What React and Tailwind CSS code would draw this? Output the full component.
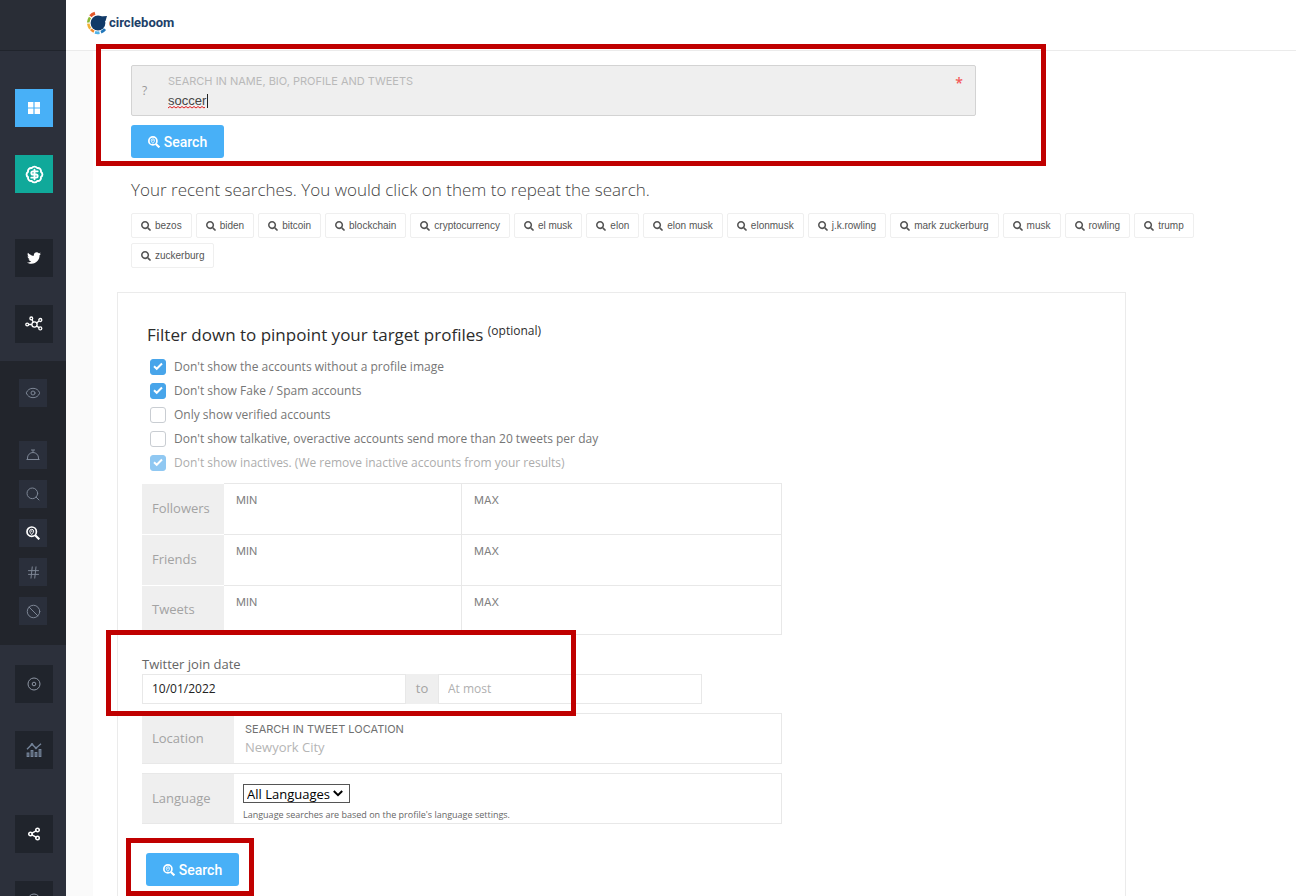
import { useState } from 'react';
import { FaSearch, FaTwitter } from 'react-icons/fa';
import { Ban, BadgeDollarSign, Eye, Hash, Search, Share2 } from 'lucide-react';

const RECENT = [
  'bezos', 'biden', 'bitcoin', 'blockchain', 'cryptocurrency', 'el musk', 'elon', 'elon musk',
  'elonmusk', 'j.k.rowling', 'mark zuckerburg', 'musk', 'rowling', 'trump', 'zuckerburg',
];

const OPTIONS = [
  { id: 'image', label: "Don't show the accounts without a profile image", checked: true },
  { id: 'spam', label: "Don't show Fake / Spam accounts", checked: true },
  { id: 'verified', label: 'Only show verified accounts', checked: false },
  { id: 'talkative', label: "Don't show talkative, overactive accounts send more than 20 tweets per day", checked: false },
  { id: 'inactive', label: "Don't show inactives. (We remove inactive accounts from your results)", checked: true, disabled: true },
];

function GridIcon() {
  return (
    <svg width="14" height="14" viewBox="0 0 14 14" fill="currentColor">
      <path d="M1 1h5.4v5.4H1zM7.6 1H13v5.4H7.6zM1 7.6h5.4V13H1zM7.6 7.6H13V13H7.6z" />
    </svg>
  );
}

function NetworkIcon() {
  return (
    <svg width="18" height="16" viewBox="0 0 18 16" fill="none" stroke="currentColor" strokeWidth="1.3">
      <circle cx="9.5" cy="8.5" r="2.6" />
      <circle cx="2.2" cy="8.5" r="1.4" />
      <circle cx="6.3" cy="2.4" r="1.4" />
      <circle cx="15.3" cy="4" r="1.5" />
      <circle cx="15.3" cy="12.4" r="1.5" />
      <path d="M3.6 8.5h3.3M7 3.6l1.3 2.6M11.7 7.1l2.3-2M11.6 10l2.4 1.6" />
    </svg>
  );
}

function BellIcon() {
  return (
    <svg width="14" height="12" viewBox="0 0 14 12" fill="none" stroke="currentColor">
      <path d="M.5 10.500h13M1.500 10.500V9a5.500 5.500 0 0 1 11 0v1.500M5 1h4M7 1v2.500" />
    </svg>
  );
}

function ProfileSearchIcon({ size = 14, width = 1.7 }) {
  return (
    <svg width={size} height={size} viewBox="0 0 14 14" fill="none" stroke="currentColor" strokeWidth={width}>
      <circle cx="5.7" cy="5.7" r="4.7" />
      <path d="M9.2 9.2l4.1 4.1" strokeWidth={width + 0.5} />
      <path d="M5.7 8.6C4.6 7.3 3.8 6.3 3.8 5.2a1.9 1.9 0 0 1 3.8 0c0 1.1-.8 2.1-1.9 3.4z" strokeWidth="1" />
      <circle cx="5.7" cy="5.2" r=".5" strokeWidth=".7" />
    </svg>
  );
}

function TargetIcon() {
  return (
    <svg width="14" height="14" viewBox="0 0 14 14" fill="none" stroke="currentColor">
      <circle cx="7" cy="7" r="6" />
      <circle cx="7" cy="7" r="1.8" />
    </svg>
  );
}

function ChartIcon() {
  return (
    <svg width="16" height="16" viewBox="0 0 16 16" fill="none" stroke="currentColor">
      <path d="M1.2 14.5v-3.500h1.600v3.500zM5.200 14.500v-6h1.600v6zM9.200 14.500v-4h1.600v4zM13.200 14.500v-7h1.600v7z" strokeWidth="1.200" />
      <path d="M1 7.200l5-5 4 4 5-4.500" strokeWidth="1.300" />
      <circle cx="6" cy="2.300" r=".9" />
      <circle cx="10" cy="6" r=".9" />
    </svg>
  );
}

function LogoMark() {
  return (
    <svg width="22" height="24" viewBox="0 0 22 24" fill="none">
      <path d="M4.400 5.300A9.500 9.500 0 0 1 9 2.300" stroke="#e2572b" strokeWidth="3" />
      <path d="M2.200 11.500A9.500 9.500 0 0 1 4 6.500" stroke="#8ab833" strokeWidth="2.600" />
      <path d="M4.300 17.600A9.500 9.500 0 0 1 2.300 12.700" stroke="#f2b134" strokeWidth="2.600" />
      <path d="M8 20.700a9 9 0 0 1-3-2.500" stroke="#ef8b2c" strokeWidth="2.600" />
      <path d="M9 21.400a9.500 9.500 0 0 0 4.500.2" stroke="#4fb3e8" strokeWidth="2.800" />
      <path d="M15 21.200a9.500 9.500 0 0 0 4-3" stroke="#2276b9" strokeWidth="2.800" />
      <circle cx="12" cy="12" r="7.400" fill="#113a68" />
      <path d="M14 5.500l7-.5-1.500 5-2.500 1z" fill="#113a68" />
    </svg>
  );
}

function NavTile({ label, className = 'bg-[#20242c] text-white', children }) {
  return (
    <button type="button" aria-label={label} className={`flex size-[38px] shrink-0 items-center justify-center ${className}`}>
      {children}
    </button>
  );
}

function SubTile({ label, active, children }) {
  return (
    <button
      type="button"
      aria-label={label}
      className={`flex size-7 items-center justify-center bg-[#2a2f3b] ${active ? 'text-white' : 'text-[#7d8695]'}`}
    >
      {children}
    </button>
  );
}

function Sidebar() {
  return (
    <nav className="flex w-[66px] shrink-0 flex-col bg-[#2c303b]">
      <div className="h-[51px] shrink-0 border-b border-[#20242c] bg-[#292d36]" />
      <div className="flex flex-col items-center gap-7 pt-[38px] pl-0.5">
        <NavTile label="Dashboard" className="bg-[#48b0f7] text-white"><GridIcon /></NavTile>
        <NavTile label="Pricing" className="bg-[#10a99a] text-white"><BadgeDollarSign size={19} strokeWidth={2.4} /></NavTile>
      </div>
      <div className="flex flex-col items-center gap-7 pt-[46px] pb-[18px] pl-0.5">
        <NavTile label="Twitter"><FaTwitter size={14} /></NavTile>
        <NavTile label="Circle"><NetworkIcon /></NavTile>
      </div>
      <div className="flex flex-col items-center gap-[11px] bg-[#22252c] pt-[18px] pb-5">
        <div className="pb-[23px]">
          <SubTile label="Overview"><Eye size={16} strokeWidth={1.5} /></SubTile>
        </div>
        <SubTile label="Services"><BellIcon /></SubTile>
        <SubTile label="Search"><Search size={16} strokeWidth={1.5} /></SubTile>
        <SubTile label="Profile search" active><ProfileSearchIcon /></SubTile>
        <SubTile label="Hashtags"><Hash size={15} strokeWidth={1.6} /></SubTile>
        <SubTile label="Blocked"><Ban size={15} strokeWidth={1.6} /></SubTile>
      </div>
      <div className="flex flex-col items-center gap-7 pt-5 pl-0.5">
        <NavTile label="Target" className="bg-[#20242c] text-[#8d95a3]"><TargetIcon /></NavTile>
        <NavTile label="Analytics" className="bg-[#20242c] text-[#76869c]"><ChartIcon /></NavTile>
      </div>
      <div className="flex flex-col items-center gap-7 pt-[46px] pl-0.5">
        <NavTile label="Share"><Share2 size={14} strokeWidth={2.6} /></NavTile>
        <NavTile label="Help" className="bg-[#20242c] text-[#8d95a3]"><TargetIcon /></NavTile>
      </div>
    </nav>
  );
}

function SearchButton() {
  return (
    <button
      type="submit"
      className="flex h-[33px] w-[93px] items-center justify-center gap-1 rounded-[3px] bg-[#48b0f7] font-['Roboto',sans-serif] text-sm font-medium text-white"
    >
      <ProfileSearchIcon size={12} width={2} />
      Search
    </button>
  );
}

// Red frame drawn over the page around its parent
function Frame({ className }) {
  return <span className={`pointer-events-none absolute border-5 border-[#c00000] ${className}`} />;
}

function Option({ option }) {
  const [checked, setChecked] = useState(option.checked);
  return (
    <label className={`flex h-6 items-center gap-2 ${option.disabled ? 'opacity-60' : ''}`}>
      <span className="relative size-4">
        <input
          type="checkbox"
          checked={checked}
          disabled={option.disabled}
          onChange={(e) => setChecked(e.target.checked)}
          className="block size-4 appearance-none rounded-[3px] border border-[#c9cdd2] bg-white checked:border-[#48a5ea] checked:bg-[#48a5ea]"
        />
        {checked && (
          <svg className="pointer-events-none absolute inset-0" width="16" height="16" viewBox="0 0 16 16" fill="none" stroke="#fff" strokeWidth="2">
            <path d="M4 7.3l2.7 2.5L12 4.5" />
          </svg>
        )}
      </span>
      {option.label}
    </label>
  );
}

function RangeRow({ name }) {
  const cell = 'block h-full border-t border-r border-[#e8e8e8] px-3 pt-2';
  const caption = "block font-['Inter',sans-serif] text-[11px] leading-4 text-[#808080]";
  return (
    <div className="grid grid-cols-[82px_238fr_320fr]">
      <div className="flex items-center border-t border-white bg-[#efefef] pl-[10px] text-[13px] text-[#a3a3a3]">{name}</div>
      <label className={cell}>
        <span className={caption}>MIN</span>
        <input type="text" className="block h-6 w-full outline-none" />
      </label>
      <label className={cell}>
        <span className={caption}>MAX</span>
        <input type="text" className="block h-6 w-full outline-none" />
      </label>
    </div>
  );
}

function Filters() {
  return (
    <form className="mx-6 mt-6 max-w-[1009px] border border-[#ebebeb] px-6 pt-7 pb-12" onSubmit={(e) => e.preventDefault()}>
      <h2 className="pl-[5px] text-[17px] leading-7 text-[#2c2c2c]">
        Filter down to pinpoint your target profiles <sup className="text-xs">(optional)</sup>
      </h2>
      <div className="mt-1.5 mb-2 pl-2 text-xs text-[#767676]">
        {OPTIONS.map((o) => <Option key={o.id} option={o} />)}
      </div>

      <div className="max-w-[640px]">
        <div className="grid grid-rows-[51px_51px_49px] border-b border-[#e8e8e8]">
          <RangeRow name="Followers" />
          <RangeRow name="Friends" />
          <RangeRow name="Tweets" />
        </div>

        <div className="relative mt-[19px] max-w-[560px]">
          <label htmlFor="from" className="block text-[13px] leading-5 text-[#666]">Twitter join date</label>
          <div className="flex h-[30px] text-xs">
            <input id="from" type="text" defaultValue="10/01/2022" className="min-w-0 flex-1 border border-[#e8e8e8] px-[9px] text-[#222] outline-none" />
            <label htmlFor="until" className="flex w-8 items-center justify-center bg-[#efefef] text-[13px] text-[#a3a3a3]">to</label>
            <input id="until" type="text" placeholder="At most" className="min-w-0 flex-1 border border-[#e8e8e8] px-[9px] outline-none placeholder:text-[#b0b0b0]" />
          </div>
          <Frame className="-top-6 right-[126px] -bottom-3 -left-9" />
        </div>

        <div className="mt-[9px] grid h-[51px] grid-cols-[92px_1fr] border border-l-0 border-[#e8e8e8]">
          <label htmlFor="location" className="flex items-center bg-[#efefef] pl-[10px] text-[13px] text-[#a3a3a3]">Location</label>
          <div className="px-[11px] pt-[7px]">
            <span className="block font-['Inter',sans-serif] text-[11px] leading-4 text-[#707070]">SEARCH IN TWEET LOCATION</span>
            <input id="location" type="text" placeholder="Newyork City" className="block h-5 w-full text-[13px] outline-none placeholder:text-[#b5b5b5]" />
          </div>
        </div>

        <div className="mt-[9px] grid h-[51px] grid-cols-[92px_1fr] border border-l-0 border-[#e8e8e8]">
          <label htmlFor="language" className="flex items-center bg-[#efefef] pl-[10px] text-[13px] text-[#a3a3a3]">Language</label>
          <div className="px-[9px] pt-2.5">
            <div className="relative w-[107px]">
              <select id="language" className="block h-[19px] w-full appearance-none border border-[#555] bg-white pl-[3px] text-[13px] leading-4 text-black">
                <option>All Languages</option>
              </select>
              <svg className="pointer-events-none absolute top-1.5 right-[7px]" width="10" height="7" viewBox="0 0 10 7" fill="none" stroke="#000" strokeWidth="2">
                <path d="M.8 1L5 5.2 9.2 1" />
              </svg>
            </div>
            <p className="mt-1 text-[9px] leading-4 text-[#666]">Language searches are based on the profile's language settings.</p>
          </div>
        </div>
      </div>

      <div className="relative mt-[29px] ml-1 w-fit">
        <SearchButton />
        <Frame className="-top-[15px] -right-[15px] -bottom-[10px] -left-5" />
      </div>
    </form>
  );
}

export default function App() {
  const [query, setQuery] = useState('soccer');

  return (
    <div className="flex h-screen overflow-hidden bg-[#fafafa] font-['Open_Sans','Noto_Sans',sans-serif]">
      <Sidebar />
      <div className="flex min-w-0 flex-1 flex-col">
        <header className="flex h-[51px] shrink-0 items-center border-b border-[#ebebeb] bg-white pb-1 pl-5">
          <a href="#home" className="flex items-center gap-px font-['Roboto',sans-serif] text-[13px] font-bold text-[#1d4068]">
            <LogoMark />
            circleboom
          </a>
        </header>

        <main className="ml-[27px] flex-1 bg-white pt-3.5">
          <form className="relative mx-[38px] max-w-[845px]" onSubmit={(e) => e.preventDefault()}>
            <div className="flex h-[51px] rounded-[2px] border border-[#d3d3d3] bg-[#efefef]">
              <span className="flex w-9 items-center pl-[10px] text-xs text-[#999]">?</span>
              <label className="relative flex-1 pt-[7px]">
                <span className="block font-['Inter',sans-serif] text-[11px] leading-4 text-[#b9b9b9]">
                  SEARCH IN NAME, BIO, PROFILE AND TWEETS
                </span>
                <input
                  type="text"
                  spellCheck={false}
                  value={query}
                  onChange={(e) => setQuery(e.target.value)}
                  className="block h-[22px] w-full font-['Liberation_Sans',sans-serif] text-[13px] text-[#444] outline-none"
                />
                {/* spelling mark and caret */}
                <svg className="pointer-events-none absolute top-10 left-0" width="39" height="3" fill="none" stroke="#e02020">
                  <path d="M0 2l2-1.500 2 1.500 2-1.500 2 1.500 2-1.500 2 1.500 2-1.500 2 1.500 2-1.500 2 1.500 2-1.500 2 1.500 2-1.500 2 1.500 2-1.500 2 1.500 2-1.500 2 1.500 1-.8" />
                </svg>
                <span className="absolute top-7 left-[39px] h-3.5 w-px bg-[#222]" />
              </label>
              <span className="pt-[7px] pr-3 text-sm leading-5 font-semibold text-[#f35958]">*</span>
            </div>
            <div className="mt-[9px]">
              <SearchButton />
            </div>
            <Frame className="-top-[21px] -right-[70px] -bottom-2 -left-[35px]" />
          </form>

          <h1 className="mt-5 ml-[38px] text-[17px] leading-6 font-light text-[#444]">
            Your recent searches. You would click on them to repeat the search.
          </h1>
          <ul className="mt-[11px] mr-16 ml-[38px] flex flex-wrap gap-x-1 gap-y-[5px]">
            {RECENT.map((term) => (
              <li key={term}>
                <button
                  type="button"
                  onClick={() => setQuery(term)}
                  className="flex h-[25px] items-center gap-1 rounded-[2px] border border-[#efefef] px-[9px] font-['Liberation_Sans',sans-serif] text-[10px] text-[#555]"
                >
                  <FaSearch size={10} />
                  {term}
                </button>
              </li>
            ))}
          </ul>

          <Filters />
        </main>
      </div>
    </div>
  );
}
